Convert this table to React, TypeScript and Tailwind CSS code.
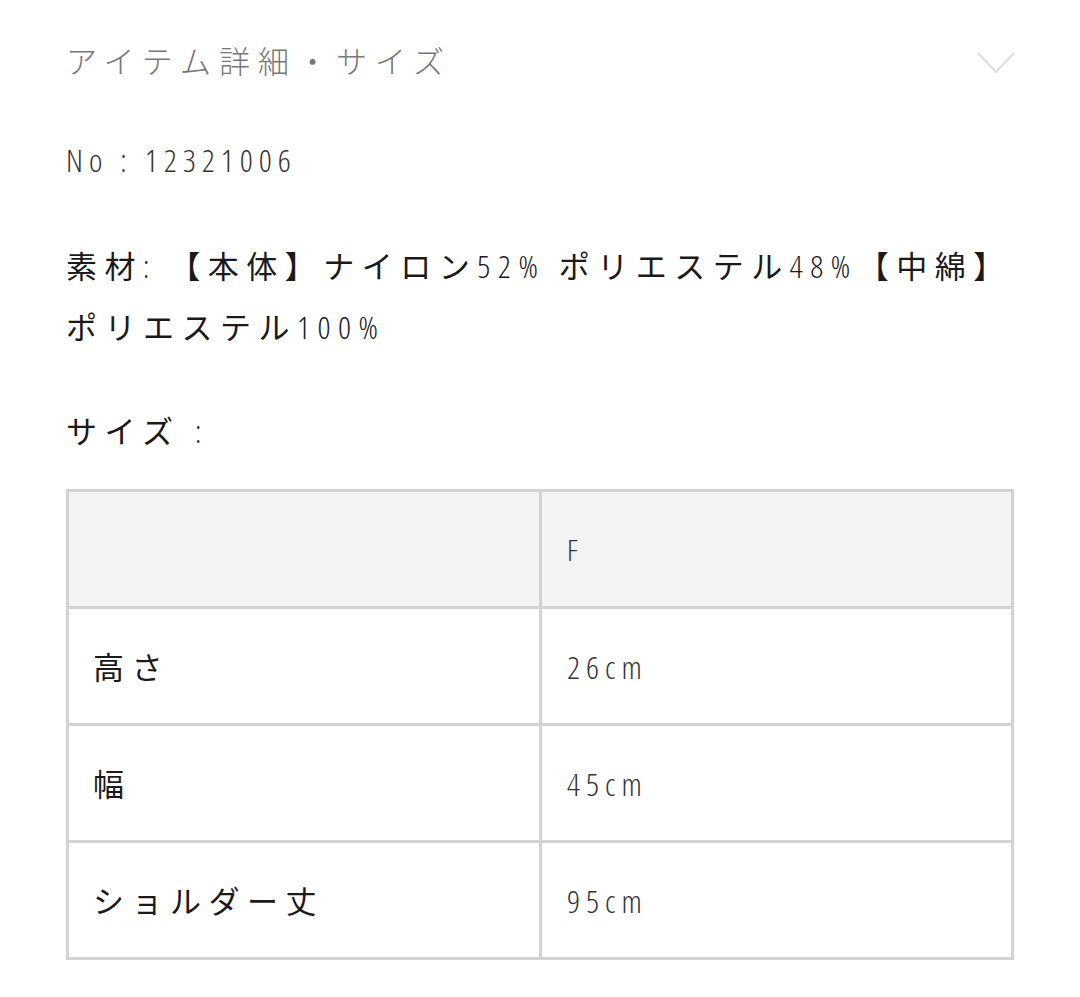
import React from 'react'

// 数字・英字はコンデンス書体（Open Sans 75%）で表示
const Num: React.FC<{ children: React.ReactNode; className?: string }> = ({
  children,
  className = 'tracking-[6px]',
}) => (
  <span
    className={`font-['Open_Sans',sans-serif] font-light font-stretch-condensed ${className}`}
  >
    {children}
  </span>
)

const rows = [
  { label: '高さ', value: '26cm' },
  { label: '幅', value: '45cm' },
  { label: 'ショルダー丈', value: '95cm' },
]

const App: React.FC = () => {
  return (
    <div className="min-h-screen w-[1080px] bg-white px-[66px] font-['Noto_Sans_CJK_JP',sans-serif] text-[#1a1a1a]">
      {/* 見出し */}
      <div className="flex items-center justify-between pt-[38px]">
        <h2 className="text-[31px] font-light leading-[44px] tracking-[8px] text-[#777]">
          アイテム詳細・サイズ
        </h2>
        <svg width="40" height="26" viewBox="0 0 40 26" className="mr-[-2px] mt-[6px]">
          <path d="M2 3 L20 22 L38 3" fill="none" stroke="#ddd" strokeWidth="2" />
        </svg>
      </div>

      {/* 品番 */}
      <div className="mt-[56px] text-[32px] leading-[40px] text-[#333]">
        <Num>No : 12321006</Num>
      </div>

      {/* 素材 */}
      <p className="mt-[55px] text-[31px] leading-[60px] tracking-[7.5px]">
        素材<Num className="text-[32px] tracking-[7px]">: </Num>【本体】ナイロン
        <Num className="text-[32px] tracking-[7.5px]">52% </Num>
        ポリエステル<Num className="text-[32px] tracking-[7.5px]">48%</Num>【中綿】ポリエステル
        <Num className="text-[32px] tracking-[7.5px]">100%</Num>
      </p>

      {/* サイズ */}
      <p className="mt-[51px] text-[31px] leading-[44px] tracking-[7.5px]">
        サイズ <Num className="text-[32px]">:</Num>
      </p>

      {/* サイズ表 */}
      <table className="mt-[36px] w-[948px] table-fixed border-collapse border-[3px] border-[#d3d3d3]">
        <tbody>
          <tr className="h-[117px] bg-[#f3f3f3]">
            <td className="w-[473px] border-[3px] border-[#d3d3d3]" />
            <td className="border-[3px] border-[#d3d3d3] pl-[25px] text-[30px] text-[#333]">
              <Num>F</Num>
            </td>
          </tr>
          {rows.map((r) => (
            <tr key={r.label} className="h-[117px]">
              <td className="border-[3px] border-[#d3d3d3] pl-[24px] text-[31px] tracking-[7.5px]">
                {r.label}
              </td>
              <td className="border-[3px] border-[#d3d3d3] pl-[25px] text-[32px] text-[#333]">
                <Num>{r.value}</Num>
              </td>
            </tr>
          ))}
        </tbody>
      </table>
    </div>
  )
}

export default App
